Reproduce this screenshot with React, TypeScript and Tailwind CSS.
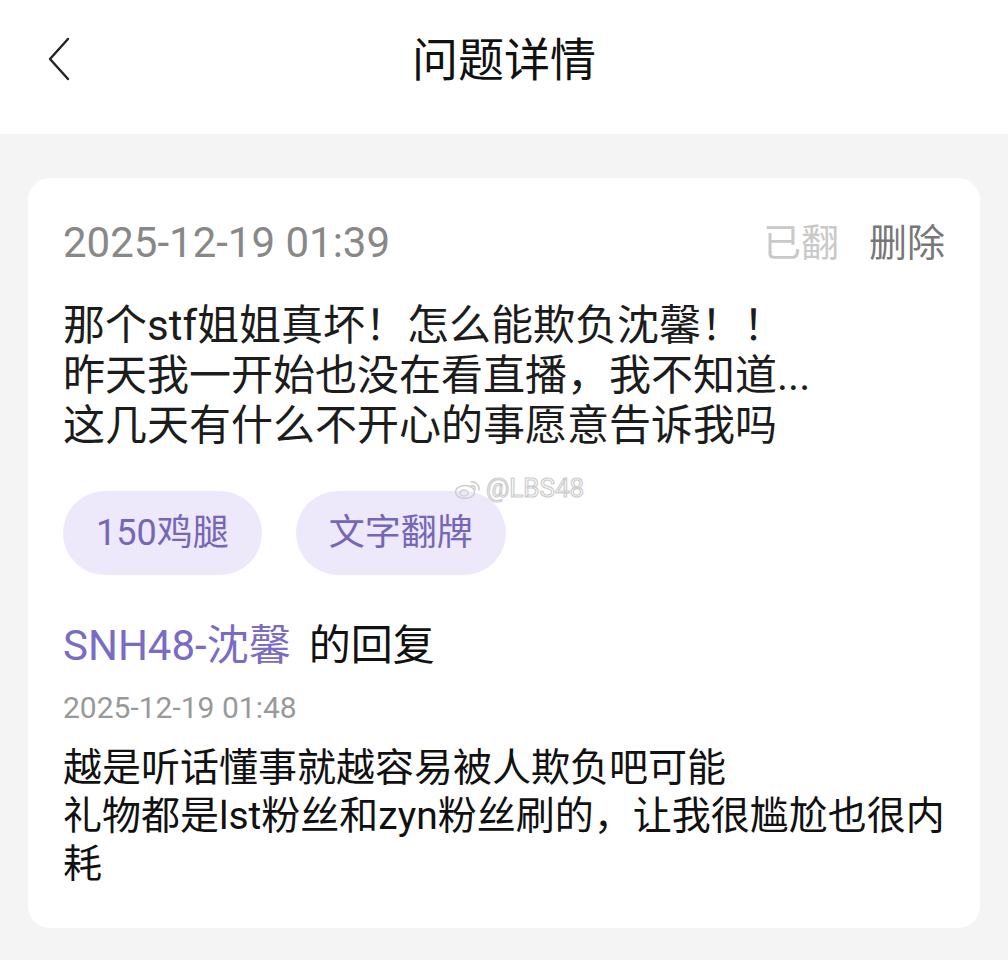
import React from "react";

const FONT = {
  fontFamily: '"Roboto", "Noto Sans CJK SC", sans-serif',
};

function BackIcon() {
  return (
    <svg width="26" height="44" viewBox="0 0 26 44" fill="none">
      <polyline
        points="22,2 4,22 22,42"
        stroke="#222"
        strokeWidth="2.4"
        strokeLinecap="round"
        strokeLinejoin="round"
      />
    </svg>
  );
}

function WeiboMark() {
  return (
    <svg width="28" height="22" viewBox="0 0 28 22" fill="none">
      <ellipse cx="11" cy="14" rx="9.5" ry="6.5" stroke="#cfcfcf" strokeWidth="1.6" />
      <ellipse cx="10" cy="15" rx="4" ry="3" stroke="#cfcfcf" strokeWidth="1.4" />
      <path d="M17 4 a7 7 0 0 1 8 8" stroke="#cfcfcf" strokeWidth="1.6" strokeLinecap="round" />
      <path d="M17 8 a3 3 0 0 1 4 4" stroke="#cfcfcf" strokeWidth="1.6" strokeLinecap="round" />
    </svg>
  );
}

function Tag({ label }: { label: string }) {
  return (
    <div className="h-[84px] px-[33px] flex items-center rounded-full bg-[#ede8fa] text-[#7566b6] text-[36px]">
      {label}
    </div>
  );
}

export default function App() {
  return (
    <div className="w-[1008px] h-[960px] bg-[#f4f4f4] overflow-hidden" style={FONT}>
      <div className="h-[134px] bg-white relative flex items-center justify-center">
        <div className="absolute left-[46px] top-[37px]">
          <BackIcon />
        </div>
        <h1 className="text-[46px] text-[#111] leading-none -mt-[15px]">问题详情</h1>
      </div>

      <div className="px-[28px] pt-[44px]">
        <div className="relative bg-white rounded-[22px] px-[35px] pt-[40px] pb-[40px]">
          <div className="flex items-center justify-between h-[50px]">
            <span className="text-[42px] text-[#888] leading-none">2025-12-19 01:39</span>
            <div className="flex gap-[30px] text-[38px] leading-none">
              <span className="text-[#c9c9c9]">已翻</span>
              <span className="text-[#777]">删除</span>
            </div>
          </div>

          <div className="mt-[33px] text-[42px] leading-[50px] text-[#1c1c1c]">
            <p>那个stf姐姐真坏！怎么能欺负沈馨！！</p>
            <p>昨天我一开始也没在看直播，我不知道...</p>
            <p>这几天有什么不开心的事愿意告诉我吗</p>
          </div>

          <div className="absolute left-[426px] top-[291px] flex items-center gap-[4px]">
            <WeiboMark />
            <span className="text-[26px] text-white [-webkit-text-stroke:1.2px_#cdcdcd]">@LBS48</span>
          </div>

          <div className="mt-[40px] flex gap-[34px]">
            <Tag label="150鸡腿" />
            <Tag label="文字翻牌" />
          </div>

          <div className="mt-[47px] h-[48px] flex items-center text-[42px] leading-none">
            <span className="text-[#7a6cc6]">SNH48-沈馨</span>
            <span className="ml-[18px] text-[#111]">的回复</span>
          </div>

          <div className="mt-[20px] h-[36px] flex items-center text-[30px] text-[#999] leading-none">
            2025-12-19 01:48
          </div>

          <div className="mt-[18px] text-[39px] leading-[48px] text-[#111]">
            <p>越是听话懂事就越容易被人欺负吧可能</p>
            <p>礼物都是lst粉丝和zyn粉丝刷的，让我很尴尬也很内</p>
            <p>耗</p>
          </div>
        </div>
      </div>
    </div>
  );
}
